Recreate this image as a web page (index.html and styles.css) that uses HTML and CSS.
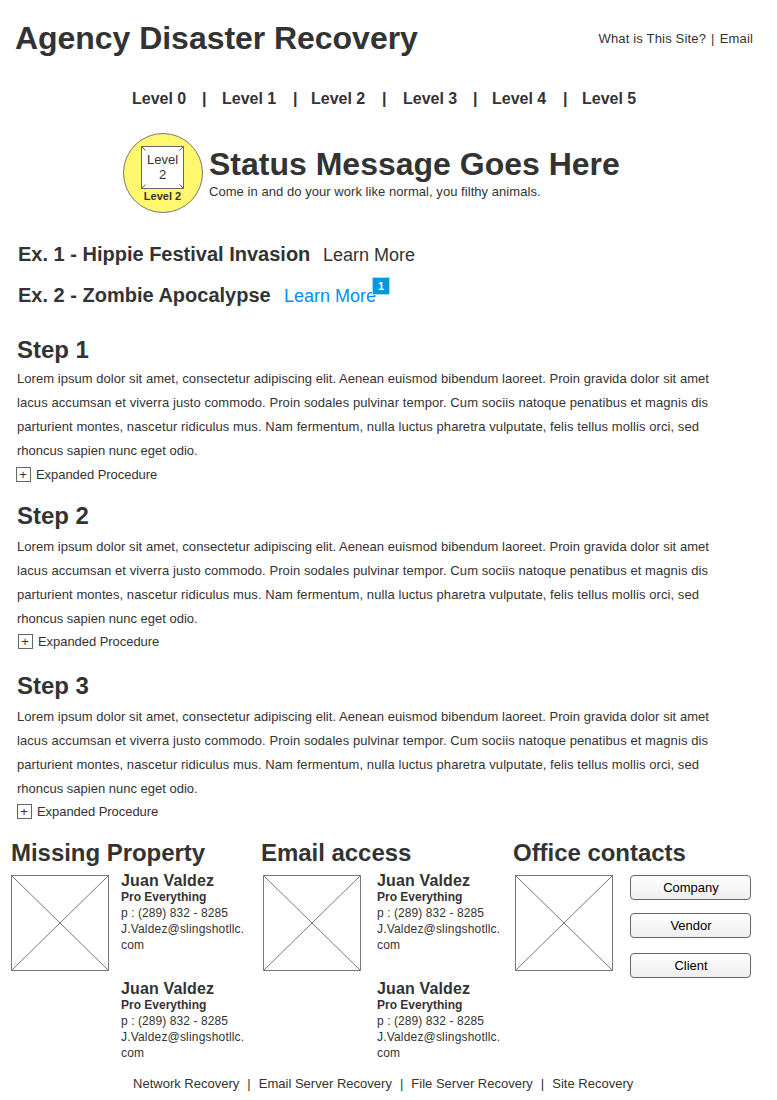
FILE: index.html
```html
<!DOCTYPE html>
<html lang="en">
<head>
<meta charset="utf-8">
<title>Agency Disaster Recovery</title>
<link rel="stylesheet" href="styles.css">
</head>
<body>
<header class="header">
  <h1 class="title">Agency Disaster Recovery</h1>
  <nav class="top-links"><span>What is This Site?</span><span>|</span><span>Email</span></nav>
</header>
<nav class="levels">
  <span>Level 0</span><span>|</span><span>Level 1</span><span>|</span><span>Level 2</span><span>|</span><span>Level 3</span><span>|</span><span>Level 4</span><span>|</span><span>Level 5</span>
</nav>
<section class="status">
  <div class="status-badge">
    <div class="status-icon">
      <svg class="corners" viewBox="0 0 43 43"><path d="M.5.5h42v42H.5zM.5.5l4 4M42.5.5l-4 4M.5 42.5l4-4M42.5 42.5l-4-4"/></svg>
      <span class="status-icon-text">Level<br>2</span>
    </div>
    <span class="status-label">Level 2</span>
  </div>
  <div>
    <h2 class="status-title">Status Message Goes Here</h2>
    <p class="status-text">Come in and do your work like normal, you filthy animals.</p>
  </div>
</section>
<section class="examples">
  <div class="example"><h3 class="example-title one">Ex. 1 - Hippie Festival Invasion</h3><a class="learn">Learn More</a></div>
  <div class="example"><h3 class="example-title two">Ex. 2 - Zombie Apocalypse</h3><a class="learn active">Learn More<span class="note">1</span></a></div>
</section>
<main>
  <section class="step first">
    <h2 class="heading">Step 1</h2>
    <p class="copy">Lorem ipsum dolor sit amet, consectetur adipiscing elit. Aenean euismod bibendum laoreet. Proin gravida dolor sit amet<br><span class="loose">lacus accumsan et viverra justo commodo. Proin sodales pulvinar tempor. Cum sociis natoque penatibus et magnis dis<br>parturient montes, nascetur ridiculus mus. Nam fermentum, nulla luctus pharetra vulputate, felis tellus mollis orci, sed</span><br><span class="plain">rhoncus sapien nunc eget odio.</span></p>
    <div class="expand"><span class="plus">+</span><span>Expanded Procedure</span></div>
  </section>
  <section class="step second">
    <h2 class="heading">Step 2</h2>
    <p class="copy">Lorem ipsum dolor sit amet, consectetur adipiscing elit. Aenean euismod bibendum laoreet. Proin gravida dolor sit amet<br><span class="loose">lacus accumsan et viverra justo commodo. Proin sodales pulvinar tempor. Cum sociis natoque penatibus et magnis dis<br>parturient montes, nascetur ridiculus mus. Nam fermentum, nulla luctus pharetra vulputate, felis tellus mollis orci, sed</span><br><span class="plain">rhoncus sapien nunc eget odio.</span></p>
    <div class="expand"><span class="plus">+</span><span>Expanded Procedure</span></div>
  </section>
  <section class="step third">
    <h2 class="heading">Step 3</h2>
    <p class="copy">Lorem ipsum dolor sit amet, consectetur adipiscing elit. Aenean euismod bibendum laoreet. Proin gravida dolor sit amet<br><span class="loose">lacus accumsan et viverra justo commodo. Proin sodales pulvinar tempor. Cum sociis natoque penatibus et magnis dis<br>parturient montes, nascetur ridiculus mus. Nam fermentum, nulla luctus pharetra vulputate, felis tellus mollis orci, sed</span><br><span class="plain">rhoncus sapien nunc eget odio.</span></p>
    <div class="expand"><span class="plus">+</span><span>Expanded Procedure</span></div>
  </section>
</main>
<section class="contacts">
  <div class="group missing">
    <h2 class="heading">Missing Property</h2>
    <div class="group-body">
      <svg class="placeholder" viewBox="0 0 98 96"><path d="M.5.5h97v95H.5zM.5.5l97 95M97.5.5l-97 95"/></svg>
      <div class="people">
        <div class="person"><h3 class="name">Juan Valdez</h3><p class="role">Pro Everything</p><p class="phone">p : (289) 832 - 8285</p><p class="mail">J.Valdez@slingshotllc.<br>com</p></div>
        <div class="person"><h3 class="name">Juan Valdez</h3><p class="role">Pro Everything</p><p class="phone">p : (289) 832 - 8285</p><p class="mail">J.Valdez@slingshotllc.<br>com</p></div>
      </div>
    </div>
  </div>
  <div class="group email">
    <h2 class="heading">Email access</h2>
    <div class="group-body">
      <svg class="placeholder" viewBox="0 0 98 96"><path d="M.5.5h97v95H.5zM.5.5l97 95M97.5.5l-97 95"/></svg>
      <div class="people">
        <div class="person"><h3 class="name">Juan Valdez</h3><p class="role">Pro Everything</p><p class="phone">p : (289) 832 - 8285</p><p class="mail">J.Valdez@slingshotllc.<br>com</p></div>
        <div class="person"><h3 class="name">Juan Valdez</h3><p class="role">Pro Everything</p><p class="phone">p : (289) 832 - 8285</p><p class="mail">J.Valdez@slingshotllc.<br>com</p></div>
      </div>
    </div>
  </div>
  <div class="group office">
    <h2 class="heading">Office contacts</h2>
    <div class="group-body">
      <svg class="placeholder" viewBox="0 0 98 96"><path d="M.5.5h97v95H.5zM.5.5l97 95M97.5.5l-97 95"/></svg>
      <div class="buttons">
        <button class="button">Company</button>
        <button class="button">Vendor</button>
        <button class="button">Client</button>
      </div>
    </div>
  </div>
</section>
<footer class="footer"><span>Network Recovery</span><span>|</span><span>Email Server Recovery</span><span>|</span><span>File Server Recovery</span><span>|</span><span>Site Recovery</span></footer>
</body>
</html>
```
FILE: styles.css
```css
* { box-sizing: border-box; }
body { margin: 0; width: 777px; height: 1100px; overflow: hidden; background: #fff; color: #333; font: 13px/16px "Liberation Sans", Arial, sans-serif; white-space: nowrap; }
h1, h2, h3, p { margin: 0; }
.header { display: flex; justify-content: space-between; padding: 20px 24px 0 15px; height: 89px; }
.title { font-size: 32px; line-height: 36px; letter-spacing: -.04px; }
.top-links { display: flex; gap: 5px; padding-top: 11px; letter-spacing: .17px; }
.levels { display: grid; grid-template-columns: 70px 20px 71px 18px 71px 21px 70px 19px 71px 19px auto; padding-left: 132px; height: 44px; font-size: 16px; line-height: 19px; font-weight: bold; }
.status { display: flex; gap: 6px; padding-left: 123px; height: 109px; }
.status-badge { display: flex; flex-direction: column; align-items: center; width: 80px; height: 80px; padding: 13px 1px 0 0; border: 1px solid #777; border-radius: 50%; background: #fff86e; }
.status-icon { display: grid; width: 43px; height: 43px; margin-top: -1px; background: #fff; }
.corners { grid-area: 1 / 1; width: 43px; height: 43px; fill: none; stroke: #666; }
.status-icon-text { grid-area: 1 / 1; padding-top: 6px; text-align: center; line-height: 15px; }
.status-label { font-size: 11px; line-height: 13px; font-weight: bold; padding-top: 1px; }
.status-title { padding-top: 13px; font-size: 32px; line-height: 36px; }
.status-text { padding-top: 2px; letter-spacing: .05px; }
.examples { padding-left: 18px; height: 94px; }
.example { display: flex; align-items: baseline; height: 41px; line-height: 24px; }
.example-title { font-size: 20px; }
.example-title.one { width: 305px; }
.example-title.two { width: 266px; }
.learn { position: relative; font-size: 18px; }
.learn.active { color: #0090ff; }
.note { position: absolute; right: -14px; top: -7px; width: 18px; height: 18px; border: 1px solid #a5dcf3; background: #0099d9; color: #fff; font-size: 11px; line-height: 17px; font-weight: bold; text-align: center; }
.heading { font-size: 24px; line-height: 28px; letter-spacing: -.04px; }
.step { padding-left: 17px; }
.step.first { height: 166px; }
.step.second { height: 170px; }
.step.third { height: 167px; }
.copy { padding-top: 3px; line-height: 24px; letter-spacing: .047px; }
.loose { letter-spacing: .078px; }
.plain { letter-spacing: 0; }
.second .copy, .third .copy { padding-top: 5px; }
.expand { display: flex; gap: 5px; align-items: center; height: 15px; margin: 4px 0 0 -1px; letter-spacing: -.05px; }
.second .expand { margin: 3px 0 0 1px; }
.third .expand { margin: 3px 0 0 0; }
.plus { width: 15px; height: 15px; padding-right: 1px; border: 1px solid #666; line-height: 13px; text-align: center; }
.contacts { display: grid; grid-template-columns: 252px 252px auto; padding-left: 11px; height: 237px; }
.email .heading, .office .heading { margin-left: -2px; }
.group-body { display: flex; }
.placeholder { width: 98px; height: 96px; margin-top: 8px; fill: none; stroke: #777; }
.people { padding: 5px 0 0 12px; font-size: 12px; }
.email .people { padding-left: 16px; }
.person { height: 108px; }
.name { height: 17px; font-size: 16px; line-height: 18px; letter-spacing: .15px; }
.role { font-size: 12px; font-weight: bold; }
.phone { letter-spacing: .08px; }
.mail { letter-spacing: .18px; }
.buttons { padding: 8px 0 0 17px; display: flex; flex-direction: column; }
.button { width: 121px; height: 25px; padding: 0 0 0 1px; margin-bottom: 13px; border: 1px solid #666; border-radius: 4px; background: linear-gradient(#fff, #eee); color: #000; font: 13px/15px "Liberation Sans", Arial, sans-serif; }
.button:nth-child(2) { margin-bottom: 15px; }
.footer { display: flex; gap: 8px; padding-left: 133px; letter-spacing: .01px; }
```
